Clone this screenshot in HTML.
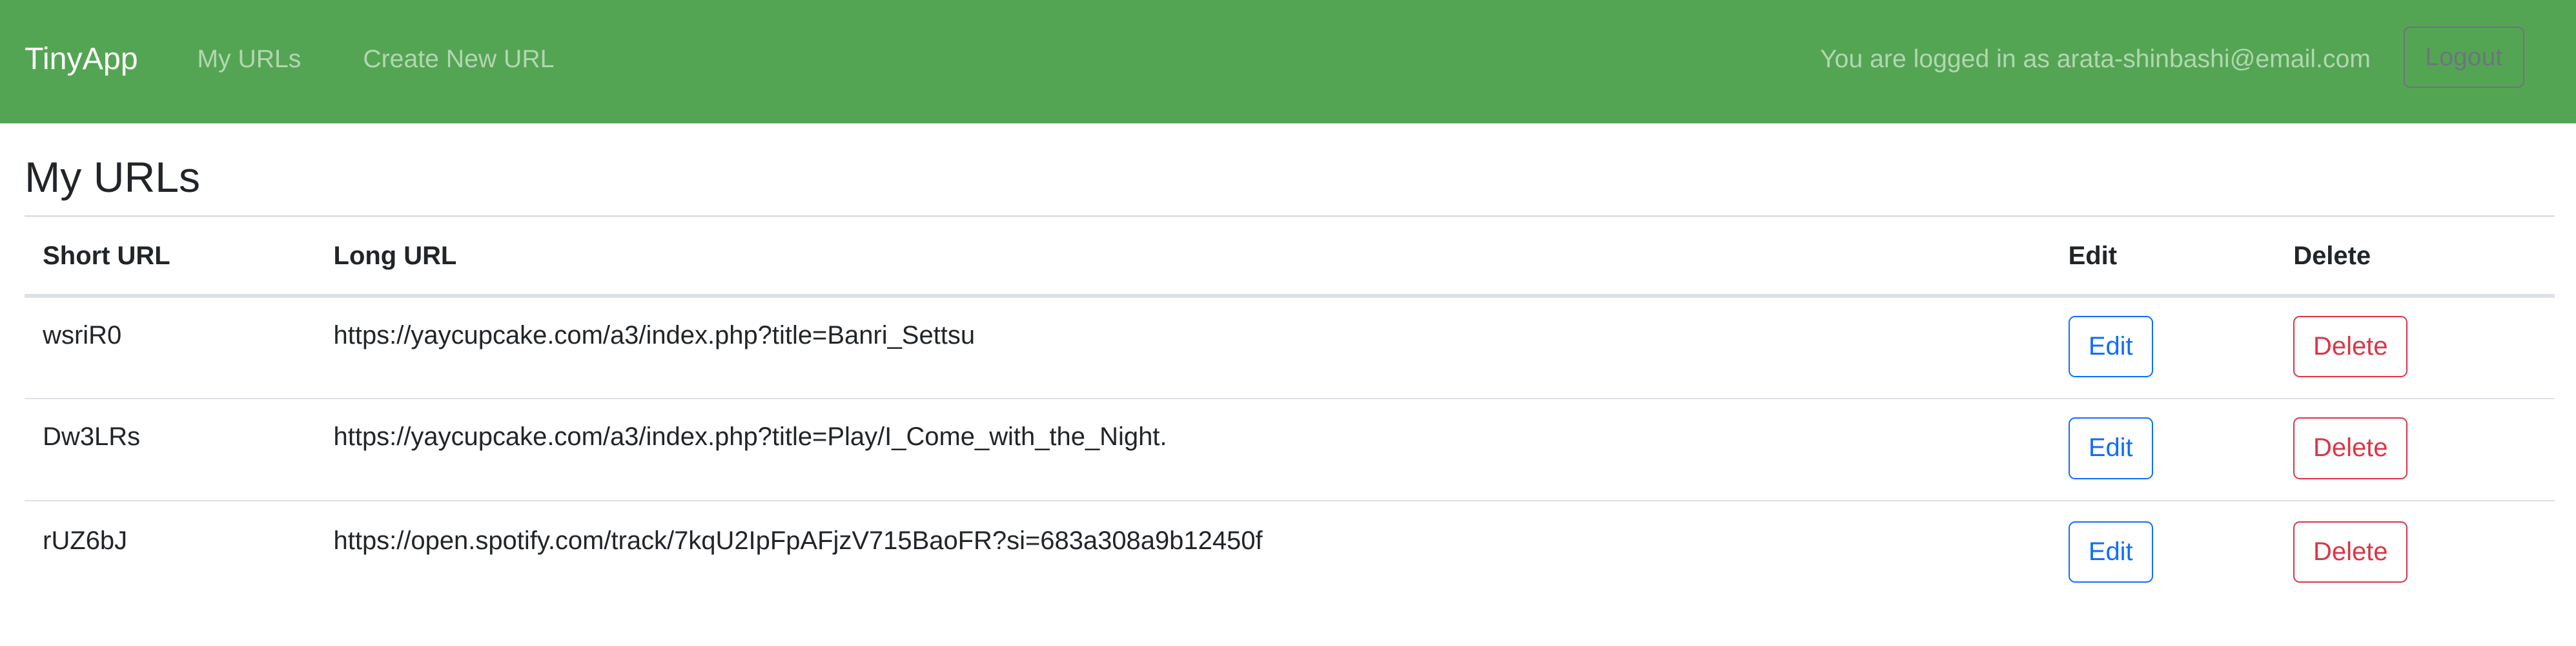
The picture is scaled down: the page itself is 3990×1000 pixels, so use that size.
<!DOCTYPE html>
<html><head><meta charset="utf-8"><style>
html,body{margin:0;padding:0;background:#fff;width:3990px;height:1000px;overflow:hidden}
#w{zoom:2.5446;width:1568px;height:393px;position:relative;font-family:"Liberation Sans",sans-serif;color:#212529;font-size:15.7px}
.a{position:absolute;white-space:nowrap;line-height:24px}
nav{position:absolute;left:0;top:0;width:1568px;height:75px;background:#54a553}
.nl{color:rgba(255,255,255,.55);font-size:15.4px}
.ln{position:absolute;left:15px;width:1540px;height:1px;background:#dee2e6}
.btn{position:absolute;height:36px;border:1px solid;border-radius:4px;text-align:center;line-height:36px;font-size:15.7px}
.e{border-color:#0d6efd;color:#0d6efd;width:50px;left:1259px}
.d{border-color:#dc3545;color:#dc3545;width:68px;left:1396px}
b{font-weight:bold}
</style></head><body><div id="w">
<nav>
<div class="a" style="left:15px;top:22px;font-size:19px;line-height:28px;color:#fff">TinyApp</div>
<div class="a nl" style="left:120px;top:24px">My URLs</div>
<div class="a nl" style="left:221px;top:24px">Create New URL</div>
<div class="a nl" style="right:125px;top:24px">You are logged in as arata-shinbashi@email.com</div>
<div class="btn" style="left:1463px;top:16px;width:72px;border-color:#6c757d;color:#6c757d;font-size:15.4px">Logout</div>
</nav>
<div class="a" style="left:15px;top:91px;font-size:26px;line-height:34px">My URLs</div>
<div class="ln" style="top:131px"></div>
<div class="a" style="left:26px;top:144px"><b>Short URL</b></div>
<div class="a" style="left:203px;top:144px"><b>Long URL</b></div>
<div class="a" style="left:1259px;top:144px"><b>Edit</b></div>
<div class="a" style="left:1396px;top:144px"><b>Delete</b></div>
<div class="ln" style="top:179px;height:2px"></div>

<div class="a" style="left:26px;top:192px">wsriR0</div>
<div class="a" style="left:203px;top:192px">https://yaycupcake.com/a3/index.php?title=Banri_Settsu</div>
<div class="btn e" style="top:192px">Edit</div>
<div class="btn d" style="top:192px">Delete</div>
<div class="ln" style="top:242px"></div>

<div class="a" style="left:26px;top:254px">Dw3LRs</div>
<div class="a" style="left:203px;top:254px">https://yaycupcake.com/a3/index.php?title=Play/I_Come_with_the_Night.</div>
<div class="btn e" style="top:254px">Edit</div>
<div class="btn d" style="top:254px">Delete</div>
<div class="ln" style="top:304px"></div>

<div class="a" style="left:26px;top:317px">rUZ6bJ</div>
<div class="a" style="left:203px;top:317px">https://open.spotify.com/track/7kqU2IpFpAFjzV715BaoFR?si=683a308a9b12450f</div>
<div class="btn e" style="top:317px">Edit</div>
<div class="btn d" style="top:317px">Delete</div>
</div></body></html>
